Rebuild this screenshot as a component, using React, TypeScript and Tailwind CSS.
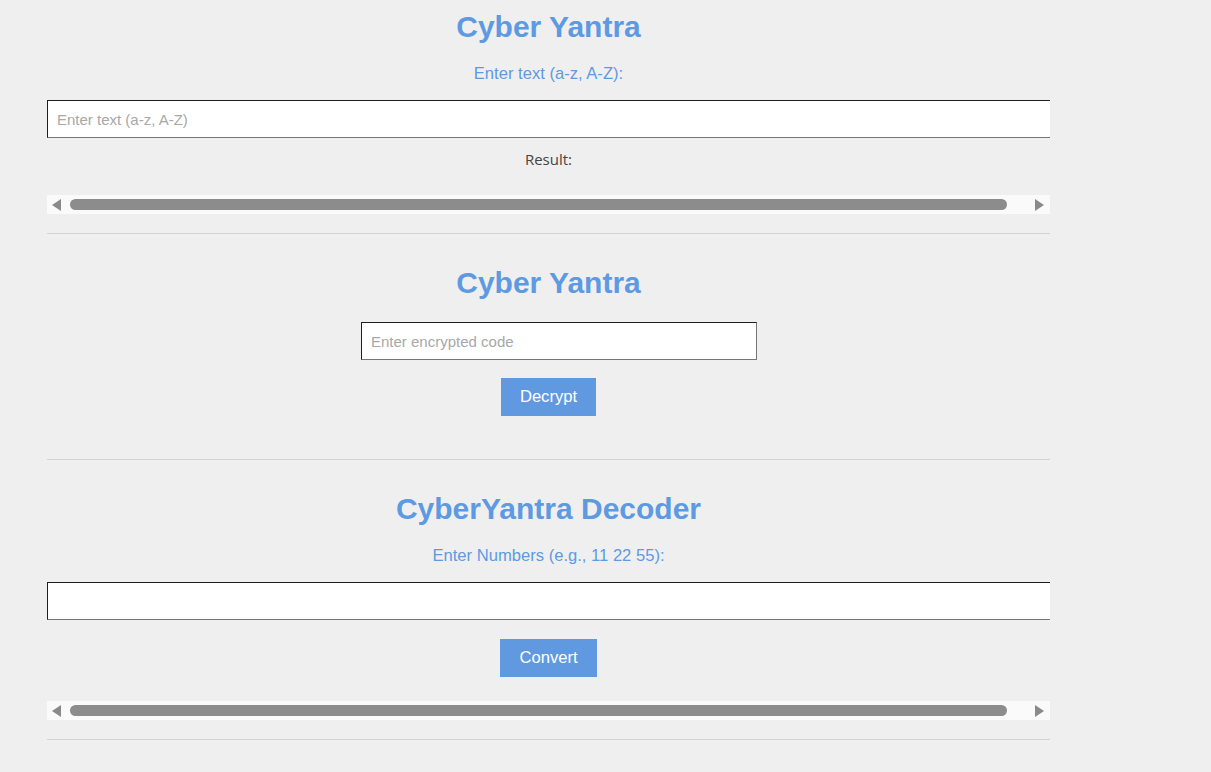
const blue = "text-[#5e9ae2]";

function FakeScrollbar() {
  return (
    <div className="w-full h-[19px] bg-[#fafafa] flex items-center">
      <svg className="ml-[5px] shrink-0" width="9" height="12" viewBox="0 0 9 12">
        <polygon points="9,0 9,12 0,6" fill="#8a8a8a" />
      </svg>
      <div className="ml-[9px] w-[937px] h-[11px] rounded-full bg-[#8c8c8c]" />
      <svg className="ml-[28px] shrink-0" width="9" height="12" viewBox="0 0 9 12">
        <polygon points="0,0 0,12 9,6" fill="#8a8a8a" />
      </svg>
    </div>
  );
}

function Title({ children }: { children: React.ReactNode }) {
  return (
    <h1 className={`text-[30px] leading-[36px] font-bold ${blue} text-center`}>{children}</h1>
  );
}

function Label({ children }: { children: React.ReactNode }) {
  return <p className={`text-[16.6px] leading-[20px] ${blue} text-center`}>{children}</p>;
}

const inputCls =
  "h-[38px] bg-white border border-t-[#1e1e1e] border-l-[#1e1e1e] border-b-[#767676] border-r-[#767676] px-[9px] text-[15px] text-[#222] outline-none placeholder:text-[#a8a8a8]";

function Button({ children }: { children: React.ReactNode }) {
  return (
    <button className="h-[38px] px-[19px] bg-[#6199e1] text-white text-[16.6px]">{children}</button>
  );
}

export default function App() {
  return (
    <div className="min-h-screen bg-[#efefef] font-['Liberation_Sans',Arial,sans-serif]">
      <div className="ml-[47px] w-[1003px] overflow-hidden flex flex-col items-center">
        {/* encoder */}
        <div className="mt-[9px]">
          <Title>Cyber Yantra</Title>
        </div>
        <div className="mt-[19px]">
          <Label>Enter text (a-z, A-Z):</Label>
        </div>
        <input className={`${inputCls} mt-[16px] w-full border-r-0`} placeholder="Enter text (a-z, A-Z)" />
        <p className="mt-[11px] leading-[20px] text-[15px] text-[#444] font-['Open_Sans',sans-serif]">Result:</p>
        <div className="mt-[26px] w-full">
          <FakeScrollbar />
        </div>
        <hr className="mt-[19px] w-full border-0 border-t border-[#d3d3d3]" />

        {/* decrypt */}
        <div className="mt-[31px]">
          <Title>Cyber Yantra</Title>
        </div>
        <input className={`${inputCls} mt-[21px] w-[396px] self-start ml-[314px]`} placeholder="Enter encrypted code" />
        <div className="mt-[18px]">
          <Button>Decrypt</Button>
        </div>
        <hr className="mt-[43px] w-full border-0 border-t border-[#d3d3d3]" />

        {/* decoder */}
        <div className="mt-[31px]">
          <Title>CyberYantra Decoder</Title>
        </div>
        <div className="mt-[19px]">
          <Label>Enter Numbers (e.g., 11 22 55):</Label>
        </div>
        <input className={`${inputCls} mt-[16px] w-full border-r-0`} />
        <div className="mt-[19px]">
          <Button>Convert</Button>
        </div>
        <div className="mt-[24px] w-full">
          <FakeScrollbar />
        </div>
        <hr className="mt-[19px] w-full border-0 border-t border-[#d3d3d3]" />
      </div>
    </div>
  );
}
